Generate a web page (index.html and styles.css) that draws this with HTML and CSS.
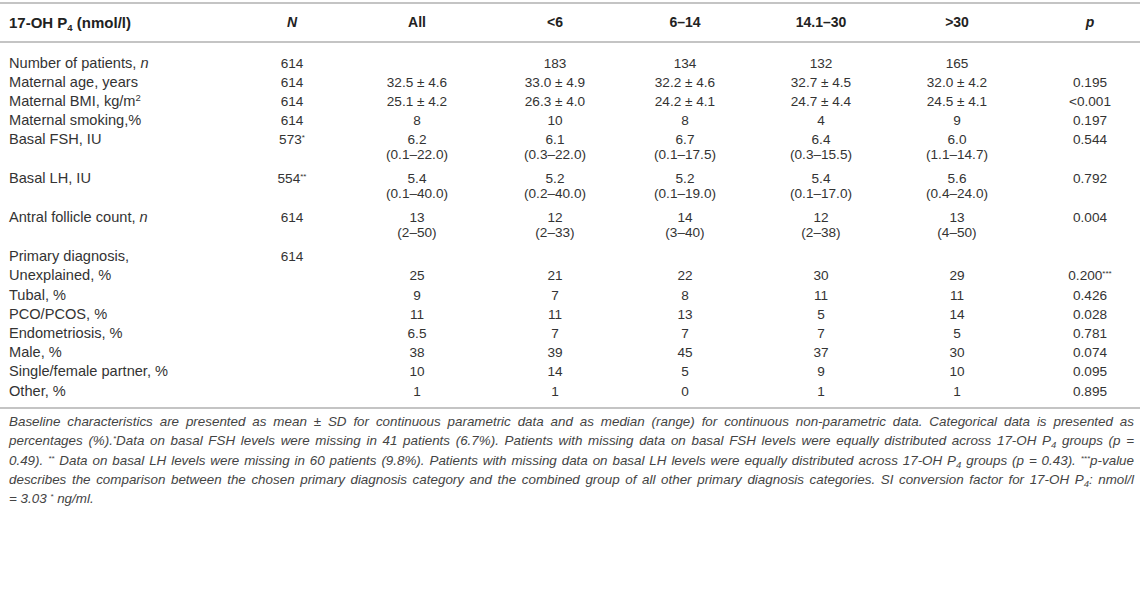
FILE: index.html
```html
<!DOCTYPE html>
<html lang="en">
<head>
<meta charset="utf-8">
<title>Table</title>
<link rel="stylesheet" href="styles.css">
</head>
<body>
<div class="wrap">
<table class="tbl">
  <colgroup>
    <col class="c0"><col class="c1"><col class="c2"><col class="c3"><col class="c4"><col class="c5"><col class="c6"><col class="c7">
  </colgroup>
  <thead>
    <tr>
      <th class="lab">17-OH P<sub>4</sub> (nmol/l)</th>
      <th><i>N</i></th>
      <th>All</th>
      <th>&lt;6</th>
      <th>6–14</th>
      <th>14.1–30</th>
      <th>&gt;30</th>
      <th class="pc"><i>p</i></th>
    </tr>
  </thead>
  <tbody>
    <tr class="first">
      <td class="lab">Number of patients, <i>n</i></td><td>614</td><td></td><td>183</td><td>134</td><td>132</td><td>165</td><td class="pc"></td>
    </tr>
    <tr>
      <td class="lab">Maternal age, years</td><td>614</td><td>32.5 ± 4.6</td><td>33.0 ± 4.9</td><td>32.2 ± 4.6</td><td>32.7 ± 4.5</td><td>32.0 ± 4.2</td><td class="pc">0.195</td>
    </tr>
    <tr>
      <td class="lab">Maternal BMI, kg/m<sup>2</sup></td><td>614</td><td>25.1 ± 4.2</td><td>26.3 ± 4.0</td><td>24.2 ± 4.1</td><td>24.7 ± 4.4</td><td>24.5 ± 4.1</td><td class="pc">&lt;0.001</td>
    </tr>
    <tr>
      <td class="lab">Maternal smoking,%</td><td>614</td><td>8</td><td>10</td><td>8</td><td>4</td><td>9</td><td class="pc">0.197</td>
    </tr>
    <tr class="two">
      <td class="lab">Basal FSH, IU</td><td>573<sup class="ast">*</sup></td><td>6.2<br>(0.1–22.0)</td><td>6.1<br>(0.3–22.0)</td><td>6.7<br>(0.1–17.5)</td><td>6.4<br>(0.3–15.5)</td><td>6.0<br>(1.1–14.7)</td><td class="pc">0.544</td>
    </tr>
    <tr class="two">
      <td class="lab">Basal LH, IU</td><td>554<sup class="ast">**</sup></td><td>5.4<br>(0.1–40.0)</td><td>5.2<br>(0.2–40.0)</td><td>5.2<br>(0.1–19.0)</td><td>5.4<br>(0.1–17.0)</td><td>5.6<br>(0.4–24.0)</td><td class="pc">0.792</td>
    </tr>
    <tr class="two">
      <td class="lab">Antral follicle count, <i>n</i></td><td>614</td><td>13<br>(2–50)</td><td>12<br>(2–33)</td><td>14<br>(3–40)</td><td>12<br>(2–38)</td><td>13<br>(4–50)</td><td class="pc">0.004</td>
    </tr>
    <tr>
      <td class="lab">Primary diagnosis,</td><td>614</td><td></td><td></td><td></td><td></td><td></td><td class="pc"></td>
    </tr>
    <tr>
      <td class="lab">Unexplained, %</td><td></td><td>25</td><td>21</td><td>22</td><td>30</td><td>29</td><td class="pc">0.200<sup class="ast">***</sup></td>
    </tr>
    <tr>
      <td class="lab">Tubal, %</td><td></td><td>9</td><td>7</td><td>8</td><td>11</td><td>11</td><td class="pc">0.426</td>
    </tr>
    <tr>
      <td class="lab">PCO/PCOS, %</td><td></td><td>11</td><td>11</td><td>13</td><td>5</td><td>14</td><td class="pc">0.028</td>
    </tr>
    <tr>
      <td class="lab">Endometriosis, %</td><td></td><td>6.5</td><td>7</td><td>7</td><td>7</td><td>5</td><td class="pc">0.781</td>
    </tr>
    <tr>
      <td class="lab">Male, %</td><td></td><td>38</td><td>39</td><td>45</td><td>37</td><td>30</td><td class="pc">0.074</td>
    </tr>
    <tr>
      <td class="lab">Single/female partner, %</td><td></td><td>10</td><td>14</td><td>5</td><td>9</td><td>10</td><td class="pc">0.095</td>
    </tr>
    <tr class="last">
      <td class="lab">Other, %</td><td></td><td>1</td><td>1</td><td>0</td><td>1</td><td>1</td><td class="pc">0.895</td>
    </tr>
  </tbody>
</table>
<p class="note">
  <span class="ln">Baseline characteristics are presented as mean ± SD for continuous parametric data and as median (range) for continuous non-parametric data. Categorical data is presented as</span>
  <span class="ln">percentages (%).<sup class="ast">*</sup>Data on basal FSH levels were missing in 41 patients (6.7%). Patients with missing data on basal FSH levels were equally distributed across 17-OH P<sub>4</sub> groups (p =</span>
  <span class="ln">0.49). <sup class="ast">**</sup> Data on basal LH levels were missing in 60 patients (9.8%). Patients with missing data on basal LH levels were equally distributed across 17-OH P<sub>4</sub> groups (p = 0.43). <sup class="ast">***</sup>p-value</span>
  <span class="ln">describes the comparison between the chosen primary diagnosis category and the combined group of all other primary diagnosis categories. SI conversion factor for 17-OH P<sub>4</sub>: nmol/l</span>
  <span class="ln end">= 3.03 <sup class="ast">*</sup> ng/ml.</span>
</p>
</div>
</body>
</html>
```
FILE: styles.css
```css
html, body {
  margin: 0;
  padding: 0;
  background: #ffffff;
}
body {
  font-family: "Liberation Sans", Arial, sans-serif;
  color: #333333;
}
.wrap {
  width: 1140px;
  padding-top: 2px;
}
.tbl {
  width: 1140px;
  table-layout: fixed;
  border-collapse: collapse;
  font-size: 13.6px;
  line-height: 15px;
}
.c0 { width: 250px; }
.c1 { width: 84px; }
.c2 { width: 166px; }
.c3 { width: 110px; }
.c4 { width: 150px; }
.c5 { width: 122px; }
.c6 { width: 150px; }
.c7 { width: 108px; }

.tbl thead tr {
  border-top: 2px solid #c4c4c4;
  border-bottom: 2px solid #c4c4c4;
}
.tbl th {
  font-weight: bold;
  font-size: 14px;
  color: #222222;
  text-align: center;
  padding: 10.5px 0 11.5px;
  vertical-align: top;
}
.tbl th.lab {
  font-size: 15px;
}
.tbl td {
  text-align: center;
  padding: 2px 0 2.2px;
  vertical-align: top;
  white-space: nowrap;
}
.tbl .lab {
  text-align: left;
  padding-left: 9px;
}
.tbl td.lab {
  font-size: 14.6px;
}
.tbl .pc {
  padding-left: 8px;
}
.tbl tr.first td {
  padding-top: 12.5px;
}
.tbl tr.two td {
  padding-bottom: 7px;
}
.tbl tr.last td {
  padding-bottom: 8px;
}
.tbl tbody tr.last {
  border-bottom: 2px solid #c4c4c4;
}
sub {
  font-size: 9.5px;
  line-height: 0;
  vertical-align: -3px;
}
sup {
  font-size: 9.5px;
  line-height: 0;
  vertical-align: 5px;
}
sup.ast {
  font-size: 8px;
  vertical-align: 4px;
}
.note {
  margin: 0;
  padding: 3.5px 6px 0 9px;
  font-style: italic;
  font-size: 13.4px;
  line-height: 19.3px;
  color: #444444;
}
.note .ln {
  display: block;
  text-align: justify;
  text-align-last: justify;
}
.note .ln.end {
  text-align: left;
  text-align-last: left;
}
```
